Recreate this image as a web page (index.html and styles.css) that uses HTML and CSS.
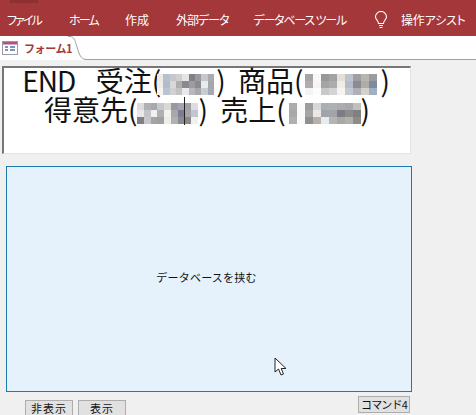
FILE: index.html
```html
<!DOCTYPE html>
<html lang="ja">
<head>
  <meta charset="UTF-8">
  <title>フォーム1</title>
  <link rel="stylesheet" href="styles.css">
</head>
<body>

<div class="ribbon">
  <div class="ribbonEdge"></div>
  <div class="menu">
    <span class="menuItem file">ファイル</span>
    <span class="menuItem home">ホーム</span>
    <span class="menuItem create">作成</span>
    <span class="menuItem external">外部データ</span>
    <span class="menuItem dbtools">データベース ツール</span>
    <svg class="bulb" width="14" height="18" viewBox="0 0 14 18">
      <path d="M4.5 12.5 C4.5 9.5 1.5 8.8 1.5 5.8 A5.5 5.3 0 0 1 12.5 5.8 C12.5 8.8 9.5 9.5 9.5 12.5 Z" fill="none" stroke="#fff" stroke-width="1.1"/>
      <path d="M5 14.5 H9 M5.5 16.5 H8.5" stroke="#fff" stroke-width="1.1"/>
    </svg>
    <span class="menuItem assist">操作アシスト</span>
  </div>
</div>

<div class="tabRow">
  <div class="tab">
    <svg class="formIcon" width="16" height="14" viewBox="0 0 16 14">
      <rect x="0.5" y="0.5" width="15" height="13" fill="#fff" stroke="#9a9aa8"/>
      <rect x="1" y="1" width="14" height="2.5" fill="#b0527e"/>
      <path d="M3 6 H6 M3 9 H6 M8 6 H13 M8 9 H13" stroke="#4a74a8" stroke-width="1.4"/>
    </svg>
    <span class="tabLabel">フォーム1</span>
    <svg class="tabCurve" width="18" height="24" viewBox="0 0 18 24">
      <path d="M0 0.5 H2 C6 0.5 7 4 9 11 C11 18 13 23.5 18 23.5" fill="#fff" stroke="#a0a0a0"/>
    </svg>
  </div>
  <div class="tabRule"></div>
</div>

<div class="form">
  <div class="titleBox">
    <div class="titleLine firstLine"><span class="endWord">END</span>  受注(<svg class="mosaic m1" viewBox="0 0 9 3" preserveAspectRatio="none" shape-rendering="crispEdges">
      <rect width="1" height="1" x="0" y="0" fill="#eee9e3"/><rect width="1" height="1" x="1" y="0" fill="#b4c1d0"/><rect width="1" height="1" x="2" y="0" fill="#c4c8cc"/><rect width="1" height="1" x="3" y="0" fill="#cfcfcf"/><rect width="1" height="1" x="4" y="0" fill="#e6e4e2"/><rect width="1" height="1" x="5" y="0" fill="#80808a"/><rect width="1" height="1" x="6" y="0" fill="#9a9a9e"/><rect width="1" height="1" x="7" y="0" fill="#c4c8cc"/><rect width="1" height="1" x="8" y="0" fill="#a8acb0"/>
      <rect width="1" height="1" x="0" y="1" fill="#f0ece6"/><rect width="1" height="1" x="1" y="1" fill="#b0bccc"/><rect width="1" height="1" x="2" y="1" fill="#d8d8d8"/><rect width="1" height="1" x="3" y="1" fill="#aeaeae"/><rect width="1" height="1" x="4" y="1" fill="#8a8a8e"/><rect width="1" height="1" x="5" y="1" fill="#9c9ca2"/><rect width="1" height="1" x="6" y="1" fill="#8c8c90"/><rect width="1" height="1" x="7" y="1" fill="#e8ecec"/><rect width="1" height="1" x="8" y="1" fill="#a4a8ac"/>
      <rect width="1" height="1" x="0" y="2" fill="#f6f4f0"/><rect width="1" height="1" x="1" y="2" fill="#b8c4d2"/><rect width="1" height="1" x="2" y="2" fill="#d0d0d0"/><rect width="1" height="1" x="3" y="2" fill="#c4c4c4"/><rect width="1" height="1" x="4" y="2" fill="#e6eaea"/><rect width="1" height="1" x="5" y="2" fill="#b8b8bc"/><rect width="1" height="1" x="6" y="2" fill="#a8a8ac"/><rect width="1" height="1" x="7" y="2" fill="#c8ccd0"/><rect width="1" height="1" x="8" y="2" fill="#a4a8b0"/>
    </svg>) 商品(<svg class="mosaic m3" viewBox="0 0 9 3" preserveAspectRatio="none" shape-rendering="crispEdges">
      <rect width="1" height="1" x="0" y="0" fill="#a8a4a4"/><rect width="1" height="1" x="1" y="0" fill="#f8f8f8"/><rect width="1" height="1" x="2" y="0" fill="#989898"/><rect width="1" height="1" x="3" y="0" fill="#a0a4a4"/><rect width="1" height="1" x="4" y="0" fill="#e4e0d8"/><rect width="1" height="1" x="5" y="0" fill="#c0c4d0"/><rect width="1" height="1" x="6" y="0" fill="#a0a0a4"/><rect width="1" height="1" x="7" y="0" fill="#b8b4b0"/><rect width="1" height="1" x="8" y="0" fill="#9c9ca0"/>
      <rect width="1" height="1" x="0" y="1" fill="#b4acac"/><rect width="1" height="1" x="1" y="1" fill="#f4f4f4"/><rect width="1" height="1" x="2" y="1" fill="#a4a4a4"/><rect width="1" height="1" x="3" y="1" fill="#acacac"/><rect width="1" height="1" x="4" y="1" fill="#f0ece4"/><rect width="1" height="1" x="5" y="1" fill="#b4bccc"/><rect width="1" height="1" x="6" y="1" fill="#8c8c90"/><rect width="1" height="1" x="7" y="1" fill="#b0aca8"/><rect width="1" height="1" x="8" y="1" fill="#7c8ca0"/>
      <rect width="1" height="1" x="0" y="2" fill="#f4f4f4"/><rect width="1" height="1" x="1" y="2" fill="#fcfcfc"/><rect width="1" height="1" x="2" y="2" fill="#c8c8c8"/><rect width="1" height="1" x="3" y="2" fill="#d4d4d4"/><rect width="1" height="1" x="4" y="2" fill="#f4f4f0"/><rect width="1" height="1" x="5" y="2" fill="#c4c8d0"/><rect width="1" height="1" x="6" y="2" fill="#b0b0b4"/><rect width="1" height="1" x="7" y="2" fill="#d4d0cc"/><rect width="1" height="1" x="8" y="2" fill="#a0b0c0"/>
    </svg>)</div>
    <div class="titleLine">得意先(<svg class="mosaic m2" viewBox="0 0 9 3" preserveAspectRatio="none" shape-rendering="crispEdges">
      <rect width="1" height="1" x="0" y="0" fill="#dcdcdc"/><rect width="1" height="1" x="1" y="0" fill="#b0b0b4"/><rect width="1" height="1" x="2" y="0" fill="#a8a8ac"/><rect width="1" height="1" x="3" y="0" fill="#c8c8c8"/><rect width="1" height="1" x="4" y="0" fill="#d8d8d4"/><rect width="1" height="1" x="5" y="0" fill="#9a9a9e"/><rect width="1" height="1" x="6" y="0" fill="#a4a4b0"/><rect width="1" height="1" x="7" y="0" fill="#a0a0a4"/><rect width="1" height="1" x="8" y="0" fill="#dcdce4"/>
      <rect width="1" height="1" x="0" y="1" fill="#e8e8e8"/><rect width="1" height="1" x="1" y="1" fill="#c4c4c8"/><rect width="1" height="1" x="2" y="1" fill="#f0f0ee"/><rect width="1" height="1" x="3" y="1" fill="#b0b0b0"/><rect width="1" height="1" x="4" y="1" fill="#f2f2ee"/><rect width="1" height="1" x="5" y="1" fill="#a8a8ac"/><rect width="1" height="1" x="6" y="1" fill="#7c7c94"/><rect width="1" height="1" x="7" y="1" fill="#a8a4a8"/><rect width="1" height="1" x="8" y="1" fill="#c4c4d0"/>
      <rect width="1" height="1" x="0" y="2" fill="#808084"/><rect width="1" height="1" x="1" y="2" fill="#c4c8cc"/><rect width="1" height="1" x="2" y="2" fill="#a4a4a4"/><rect width="1" height="1" x="3" y="2" fill="#a0a0a0"/><rect width="1" height="1" x="4" y="2" fill="#ecece8"/><rect width="1" height="1" x="5" y="2" fill="#b0b0b0"/><rect width="1" height="1" x="6" y="2" fill="#8c8c90"/><rect width="1" height="1" x="7" y="2" fill="#8c8888"/><rect width="1" height="1" x="8" y="2" fill="#f0f0f0"/>
    </svg>) 売上(<svg class="mosaic m4" viewBox="0 0 9 3" preserveAspectRatio="none" shape-rendering="crispEdges">
      <rect width="1" height="1" x="0" y="0" fill="#acacac"/><rect width="1" height="1" x="1" y="0" fill="#fafafa"/><rect width="1" height="1" x="2" y="0" fill="#9c9c9c"/><rect width="1" height="1" x="3" y="0" fill="#d4d8d8"/><rect width="1" height="1" x="4" y="0" fill="#a8b0b0"/><rect width="1" height="1" x="5" y="0" fill="#b0b0b4"/><rect width="1" height="1" x="6" y="0" fill="#acacb0"/><rect width="1" height="1" x="7" y="0" fill="#a8a8a8"/><rect width="1" height="1" x="8" y="0" fill="#c0c0bc"/>
      <rect width="1" height="1" x="0" y="1" fill="#a8a8a8"/><rect width="1" height="1" x="1" y="1" fill="#fafafa"/><rect width="1" height="1" x="2" y="1" fill="#a4a4a4"/><rect width="1" height="1" x="3" y="1" fill="#e8e8e4"/><rect width="1" height="1" x="4" y="1" fill="#a0a4a8"/><rect width="1" height="1" x="5" y="1" fill="#a4a4a8"/><rect width="1" height="1" x="6" y="1" fill="#7c7c88"/><rect width="1" height="1" x="7" y="1" fill="#8c8c8c"/><rect width="1" height="1" x="8" y="1" fill="#808080"/>
      <rect width="1" height="1" x="0" y="2" fill="#b0b0b0"/><rect width="1" height="1" x="1" y="2" fill="#fafafa"/><rect width="1" height="1" x="2" y="2" fill="#909090"/><rect width="1" height="1" x="3" y="2" fill="#b8b0ac"/><rect width="1" height="1" x="4" y="2" fill="#e4eef2"/><rect width="1" height="1" x="5" y="2" fill="#b4b4b0"/><rect width="1" height="1" x="6" y="2" fill="#a8a8a4"/><rect width="1" height="1" x="7" y="2" fill="#b0b0ac"/><rect width="1" height="1" x="8" y="2" fill="#8c8c88"/>
    </svg>)</div>
    <div class="caret"></div>
  </div>

  <div class="panel">
    <span class="panelLabel">データベースを挟む</span>
    <svg class="pointer" width="14" height="20" viewBox="0 0 14 20">
      <path d="M1 1 V15 L4.5 12 L7 18 L9.5 17 L7.2 11.5 H12 Z" fill="#fff" stroke="#222" stroke-width="1"/>
    </svg>
  </div>

  <div class="buttonRow">
    <div class="btn hide">非表示</div>
    <div class="btn show">表示</div>
    <div class="btn command">コマンド4</div>
  </div>
</div>

</body>
</html>
```

FILE: styles.css
```css
*, *:before, *:after {
  box-sizing: border-box;
}

html, body {
  height: 100%;
}

body {
  margin: 0;
  overflow: hidden;
  background: #f0f0f0;
  font-family: "Noto Sans CJK JP", "Liberation Sans", sans-serif;
  color: #111;
}

.ribbon {
  height: 36px;
  background: #a4373a;
}

.ribbonEdge {
  width: 28px;
  height: 3px;
  margin-left: 10px;
  background: #8e2f32;
}

.menu {
  display: flex;
  align-items: center;
  height: 33px;
  padding-left: 7px;
  color: #fff;
  font-size: 12px;
  font-feature-settings: "palt";
  white-space: nowrap;
}

.menuItem {
  display: block;
}

.file { letter-spacing: -1.9px; }
.home { margin-left: 28px; letter-spacing: -1.8px; }
.create { margin-left: 27px; }
.external { margin-left: 27px; letter-spacing: -1px; }
.dbtools { margin-left: 25px; letter-spacing: -1.2px; }
.bulb { margin-left: 28px; }
.assist { margin-left: 13px; letter-spacing: -0.2px; }

.tabRow {
  display: flex;
  height: 24px;
  background: #fff;
}

.tab {
  display: flex;
  align-items: center;
  width: 85px;
  height: 24px;
  position: relative;
}

.formIcon {
  margin-left: 2px;
}

.tabLabel {
  margin-left: 6px;
  color: #a4373a;
  font-size: 11px;
  font-weight: 700;
  letter-spacing: -0.4px;
}

.tabCurve {
  position: absolute;
  top: 0;
  right: -1px;
}

.tabRule {
  flex: 1;
  height: 1px;
  margin-top: 23px;
  background: #a0a0a0;
}

.form {
  padding: 6px 0 0 2px;
}

.titleBox {
  position: relative;
  width: 409px;
  height: 88px;
  padding-top: 0;
  background: #fff;
  border-top: 2px solid #777;
  border-left: 2px solid #777;
  border-right: 1px solid #e4e4e4;
  border-bottom: 1px solid #e4e4e4;
  font-size: 28px;
  line-height: 29px;
  text-align: center;
}

.titleLine {
  white-space: pre;
  word-spacing: 6px;
}

.firstLine {
  margin-top: -2px;
  padding-right: 2px;
}

.endWord {
  margin-right: -4px;
  letter-spacing: -1px;
}

.mosaic {
  display: inline-block;
  vertical-align: -3px;
  height: 21px;
}

.m1 { width: 57px; margin: 0 2px 0 -4px; }
.m2 { width: 61px; }
.m3 { width: 72px; margin: 0 3px 0 2px; }
.m4 { width: 72px; margin-left: 3px; }

.caret {
  position: absolute;
  left: 180px;
  top: 29px;
  width: 1px;
  height: 28px;
  background: #222;
}

.panel {
  display: flex;
  align-items: center;
  justify-content: center;
  position: relative;
  width: 406px;
  height: 226px;
  margin: 12px 0 0 4px;
  padding: 0 5px 4px 0;
  background: #e5f1fb;
  border: 1px solid #1d7ab0;
  font-size: 11px;
}

.panelLabel {
  letter-spacing: 0.25px;
}

.pointer {
  position: absolute;
  left: 267px;
  top: 190px;
}

.buttonRow {
  display: flex;
  align-items: flex-start;
  padding: 4px 0 0 23px;
}

.btn {
  height: 17px;
  background: #e1e1e1;
  border: 1px solid #adadad;
  font-size: 11px;
  line-height: 15px;
  text-align: center;
  white-space: nowrap;
}

.hide {
  width: 48px;
  margin-top: 4px;
  letter-spacing: 1px;
}

.show {
  width: 48px;
  margin: 4px 0 0 5px;
  letter-spacing: 1px;
}

.command {
  width: 52px;
  margin-left: 232px;
  letter-spacing: -0.8px;
}
```
